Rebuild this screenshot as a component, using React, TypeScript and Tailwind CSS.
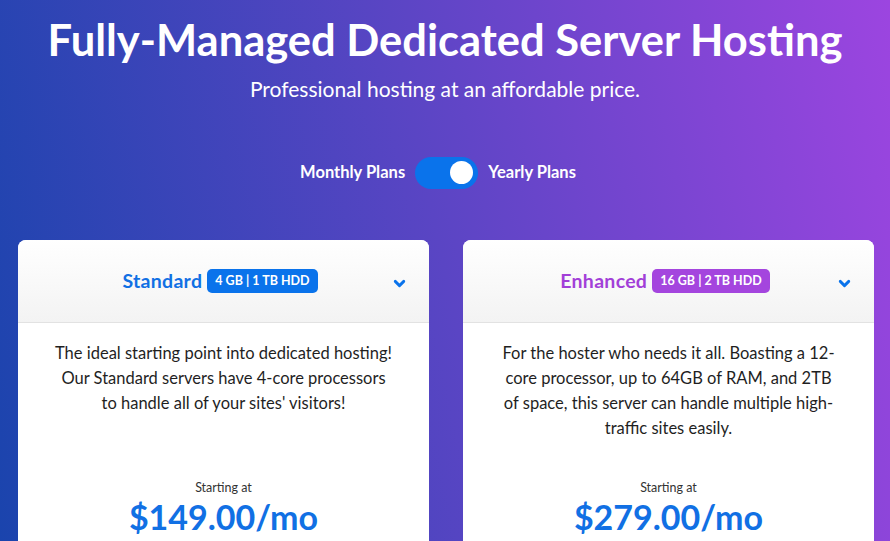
import { ChevronDown } from 'lucide-react'

const plans = [
  {
    name: 'Standard',
    specs: '4 GB | 1 TB HDD',
    nameColor: 'text-[#1170e4]',
    badgeColor: 'bg-[#0a73eb]',
    lines: [
      'The ideal starting point into dedicated hosting!',
      'Our Standard servers have 4-core processors',
      "to handle all of your sites' visitors!",
    ],
    price: '$149.00/mo',
  },
  {
    name: 'Enhanced',
    specs: '16 GB | 2 TB HDD',
    nameColor: 'text-[#a23fd8]',
    badgeColor: 'bg-[#a445de]',
    lines: [
      'For the hoster who needs it all. Boasting a 12-',
      'core processor, up to 64GB of RAM, and 2TB',
      'of space, this server can handle multiple high-',
      'traffic sites easily.',
    ],
    price: '$279.00/mo',
  },
]

function PlanCard({ plan }: { plan: (typeof plans)[number] }) {
  return (
    <div className="flex flex-col overflow-hidden rounded-t-lg bg-white">
      {/* Header */}
      <div className="relative flex h-[83px] items-center justify-center gap-[5px] border-b border-[#e2e2e2] bg-gradient-to-b from-white to-[#f3f3f3] pr-[7px]">
        <span className={`font-['Lato'] text-[19.5px] font-bold tracking-[0.3px] ${plan.nameColor}`}>{plan.name}</span>
        <span className={`rounded-[5px] px-[8px] py-[3px] font-['Lato'] text-[12.5px] font-bold leading-[18px] text-white ${plan.badgeColor}`}>
          {plan.specs}
        </span>
        <ChevronDown className="absolute right-[21px] top-[35px] h-[17px] w-[17px] text-[#0a73eb]" strokeWidth={4} />
      </div>

      {/* Body */}
      <div className="flex h-[240px] flex-col items-center px-6 pb-[27px] pt-[18px]">
        <p className="text-center font-['Lato'] text-[16.5px] leading-[25px] text-[#1f1f1f]">
          {plan.lines.map((l, i) => (
            <span key={i} className="block whitespace-nowrap">
              {l}
            </span>
          ))}
        </p>
        <div className="mt-auto flex flex-col items-center">
          <span className="font-['Lato'] text-[12.5px] text-[#333]">Starting at</span>
          <span className="font-['Lato'] text-[34px] font-bold leading-[38px] text-[#1170e4]">{plan.price}</span>
        </div>
      </div>
    </div>
  )
}

export default function App() {
  return (
    <section className="h-[541px] w-[890px] overflow-hidden bg-[linear-gradient(78deg,#1a44ad,#5a45c4_50%,#9c45e0)]">
      <div className="flex flex-col items-center pt-[12px]">
        <h1 className="font-['Lato'] text-[43.5px] font-bold leading-[54px] text-white">
          Fully-Managed Dedicated Server Hosting
        </h1>
        <p className="mt-[7px] font-['Lato'] text-[21px] text-white">Professional hosting at an affordable price.</p>

        {/* Billing toggle */}
        <div className="mr-[14px] mt-[52px] flex items-center gap-[10px] font-['Lato'] text-[16.5px] font-bold text-white">
          <span>Monthly Plans</span>
          <div className="flex h-[32px] w-[63px] items-center justify-end rounded-full bg-[#0a73eb] px-[5px]">
            <div className="h-[23px] w-[23px] rounded-full bg-white" />
          </div>
          <span>Yearly Plans</span>
        </div>
      </div>

      {/* Plan cards */}
      <div className="mt-[51px] grid grid-cols-2 gap-[34px] pl-[18px] pr-[16px]">
        {plans.map((p) => (
          <PlanCard key={p.name} plan={p} />
        ))}
      </div>
    </section>
  )
}
